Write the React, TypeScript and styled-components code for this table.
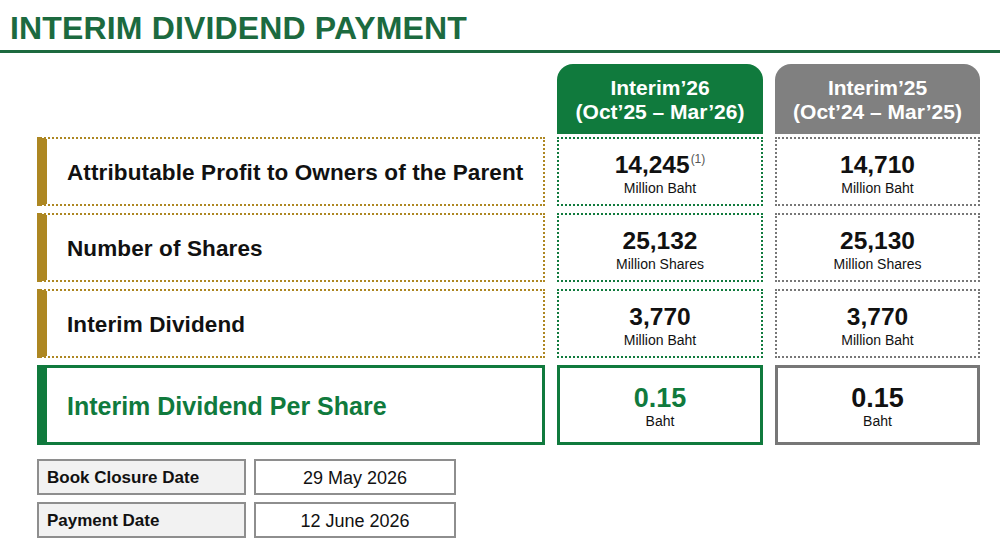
import React from "react";
import styled, { createGlobalStyle, css } from "styled-components";

const GREEN = "#107a3d";
const TITLE_GREEN = "#1c6a3f";
const GOLD = "#ad8722";
const GRAY = "#808080";
const GRAY_LINE = "#777777";

const Global = createGlobalStyle`
  html, body { margin: 0; padding: 0; background: #fff; }
  body { font-family: "Liberation Sans", Arial, sans-serif; color: #111; }
`;

const Page = styled.div`
  width: 1000px;
  height: 542px;
  overflow: hidden;
  background: #fff;
`;

const TitleBar = styled.header`
  padding: 9px 0 3px 10px;
  border-bottom: 3px solid ${TITLE_GREEN};
`;

const Title = styled.h1`
  margin: 0;
  font-size: 32px;
  line-height: 38px;
  letter-spacing: 0.15px;
  font-weight: 700;
  color: ${TITLE_GREEN};
`;

const Board = styled.section`
  margin: 11px 0 0 37px;
  display: flex;
  flex-direction: column;
  gap: 7px;
`;

const Grid = styled.div<{ $h: number }>`
  display: grid;
  grid-template-columns: 508px 206px 205px;
  column-gap: 12px;
  height: ${(p) => p.$h}px;
`;

const HeaderRow = styled(Grid)`
  margin-bottom: -4px;
`;

const Tab = styled.div<{ $tone: "green" | "gray" }>`
  background: ${(p) => (p.$tone === "green" ? GREEN : GRAY)};
  border-radius: 16px 16px 0 0;
  color: #fff;
  font-weight: 700;
  font-size: 21px;
  line-height: 24px;
  display: flex;
  flex-direction: column;
  align-items: center;
  justify-content: center;
  padding-top: 2px;
`;

const Label = styled.div<{ $main?: boolean }>`
  display: flex;
  align-items: center;
  padding: 2px 0 0 20px;
  font-weight: 700;
  ${(p) =>
    p.$main
      ? css`
          border: 3px solid ${GREEN};
          border-left: 10px solid ${GREEN};
          color: ${GREEN};
          font-size: 25px;
        `
      : css`
          border: 2px dotted ${GOLD};
          border-left: 10px solid ${GOLD};
          color: #111;
          font-size: 22.5px;
          letter-spacing: 0.12px;
        `}
`;

const Value = styled.div<{ $tone: "green" | "gray"; $main?: boolean }>`
  display: flex;
  flex-direction: column;
  align-items: center;
  justify-content: center;
  padding-top: 6px;
  border: ${(p) => (p.$main ? "3px solid" : "2px dotted")}
    ${(p) => (p.$tone === "green" ? GREEN : GRAY_LINE)};
`;

const Number = styled.div<{ $main?: boolean; $green?: boolean }>`
  font-weight: 700;
  font-size: ${(p) => (p.$main ? 27 : 24.5)}px;
  line-height: 26px;
  color: ${(p) => (p.$green ? GREEN : "#111")};
  display: flex;
  align-items: flex-start;
`;

const Sup = styled.span`
  font-size: 12px;
  font-weight: 400;
  line-height: 12px;
  color: #555;
  margin-left: 1px;
  margin-top: 1px;
`;

const Unit = styled.div`
  font-size: 14px;
  line-height: 20px;
  color: #111;
`;

const Dates = styled.div`
  margin: 14px 0 0 37px;
  display: grid;
  grid-template-columns: 209px 202px;
  grid-auto-rows: 36px;
  column-gap: 8px;
  row-gap: 7px;
`;

const DateLabel = styled.div`
  background: #f2f2f2;
  border: 2px solid #8e8e8e;
  display: flex;
  align-items: center;
  padding: 2px 0 0 8px;
  font-weight: 700;
  font-size: 17px;
  color: #111;
`;

const DateValue = styled.div`
  background: #fff;
  border: 2px solid #8e8e8e;
  display: flex;
  align-items: center;
  justify-content: center;
  padding-top: 2px;
  font-size: 18px;
  color: #111;
`;

type Row = {
  label: string;
  a: string;
  b: string;
  unit: string;
  sup?: string;
  main?: boolean;
  h: number;
};

const rows: Row[] = [
  { label: "Attributable Profit to Owners of the Parent", a: "14,245", b: "14,710", unit: "Million Baht", sup: "(1)", h: 69 },
  { label: "Number of Shares", a: "25,132", b: "25,130", unit: "Million Shares", h: 69 },
  { label: "Interim Dividend", a: "3,770", b: "3,770", unit: "Million Baht", h: 69 },
  { label: "Interim Dividend Per Share", a: "0.15", b: "0.15", unit: "Baht", main: true, h: 80 },
];

export default function App() {
  return (
    <Page>
      <Global />
      <TitleBar>
        <Title>INTERIM DIVIDEND PAYMENT</Title>
      </TitleBar>
      <Board>
        <HeaderRow $h={70}>
          <div />
          <Tab $tone="green">
            <span>Interim’26</span>
            <span>(Oct’25 – Mar’26)</span>
          </Tab>
          <Tab $tone="gray">
            <span>Interim’25</span>
            <span>(Oct’24 – Mar’25)</span>
          </Tab>
        </HeaderRow>
        {rows.map((r) => (
          <Grid $h={r.h} key={r.label}>
            <Label $main={r.main}>{r.label}</Label>
            <Value $tone="green" $main={r.main}>
              <Number $main={r.main} $green={r.main}>
                {r.a}
                {r.sup && <Sup>{r.sup}</Sup>}
              </Number>
              <Unit>{r.unit}</Unit>
            </Value>
            <Value $tone="gray" $main={r.main}>
              <Number $main={r.main}>{r.b}</Number>
              <Unit>{r.unit}</Unit>
            </Value>
          </Grid>
        ))}
      </Board>
      <Dates>
        <DateLabel>Book Closure Date</DateLabel>
        <DateValue>29 May 2026</DateValue>
        <DateLabel>Payment Date</DateLabel>
        <DateValue>12 June 2026</DateValue>
      </Dates>
    </Page>
  );
}
